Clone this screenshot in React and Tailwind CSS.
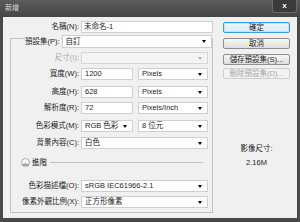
const font = "font-['Liberation_Sans','Noto_Sans_CJK_TC',sans-serif]";

function Arrow({ disabled }) {
  return (
    <span
      className={
        "ml-auto mr-[5px] w-0 h-0 border-l-[2.5px] border-r-[2.5px] border-t-[3px] border-l-transparent border-r-transparent " +
        (disabled ? "border-t-[#b0b0b0]" : "border-t-black")
      }
    />
  );
}

function Select({ children, className = "", disabled, arrow = true }) {
  return (
    <div
      className={
        "flex items-center h-[12px] border pl-[3px] " +
        (disabled ? "bg-[#f4f4f4] border-[#d6d6d6] " : "bg-white border-[#cfcfcf] ") +
        className
      }
    >
      <span className="leading-none whitespace-nowrap">{children}</span>
      {arrow && <Arrow disabled={disabled} />}
    </div>
  );
}

function Row({ label, children, disabled, className = "" }) {
  return (
    <div className={"flex items-center " + className}>
      <span className={"w-[68px] text-right leading-none whitespace-nowrap " + (disabled ? "text-[#a8a8a8]" : "")}>
        {label}
      </span>
      <div className="ml-[2px] flex items-center">{children}</div>
    </div>
  );
}

function Btn({ children, primary, disabled }) {
  return (
    <div
      className={
        "w-[67px] h-[11px] flex items-center justify-center rounded-[2px] border leading-none whitespace-nowrap " +
        (primary
          ? "border-[#3b9ad8] bg-gradient-to-b from-[#eaf6fd] to-[#d5ebf9] shadow-[0_0_0_1px_#bfe3f7_inset]"
          : disabled
          ? "border-[#cfcfcf] bg-[#f2f2f2] text-[#a8a8a8]"
          : "border-[#8f8f8f] bg-gradient-to-b from-[#f6f6f6] to-[#dedede]")
      }
    >
      {children}
    </div>
  );
}

export default function App() {
  return (
    <div className={"w-[300px] h-[222px] bg-[#4a4a4a] flex flex-col text-[7.5px] text-[#1e1e1e] " + font}>
      <div className="h-[17px] flex bg-gradient-to-b from-[#5c5c5c] to-[#444]">
        <span className="ml-[5px] mt-[4px] text-[7px] text-[#d8d8d8] leading-none">新增</span>
        <div className="ml-auto mr-[3px] w-[25px] h-[13px] rounded-b-[3px] border border-t-0 border-[#6a6a6a] bg-[#3a3a3a] flex items-center justify-center text-white text-[8px] font-bold leading-none">
          x
        </div>
      </div>

      <div className="flex-1 mx-[3px] mb-[4px] bg-[#f0f0f0] flex">
        <div className="w-[210px] flex flex-col pt-[4px]">
          <div className="flex items-center">
            <span className="w-[76px] text-right leading-none">名稱(N):</span>
            <div className="ml-[2px] w-[132px] h-[12px] bg-white border border-[#cfcfcf] flex items-center pl-[2px] leading-none">
              未命名-1
            </div>
          </div>

          <div className="mt-[5px] ml-[7px] w-[203px] h-[175px] border border-[#c2c2c2] flex flex-col">
            <div className="-mt-[4px] flex items-center">
              <span className="ml-[14px] bg-[#f0f0f0] pr-[1px] leading-none">預設集(P):</span>
              <Select className="flex-1 h-[13px] ml-[1px]">自訂</Select>
            </div>

            <Row label="尺寸(I):" disabled className="mt-[4px]">
              <Select disabled className="w-[127px]">{""}</Select>
            </Row>

            <Row label="寬度(W):" className="mt-[4px]">
              <Select arrow={false} className="w-[52px]">1200</Select>
              <Select className="w-[70px] ml-[5px]">Pixels</Select>
            </Row>
            <Row label="高度(H):" className="mt-[6px]">
              <Select arrow={false} className="w-[52px]">628</Select>
              <Select className="w-[70px] ml-[5px]">Pixels</Select>
            </Row>
            <Row label="解析度(R):" className="mt-[4px]">
              <Select arrow={false} className="w-[52px]">72</Select>
              <Select className="w-[70px] ml-[5px]">Pixels/Inch</Select>
            </Row>
            <Row label="色彩模式(M):" className="mt-[6px]">
              <Select className="w-[52px]">RGB 色彩</Select>
              <Select className="w-[70px] ml-[5px]">8 位元</Select>
            </Row>
            <Row label="背景內容(C):" className="mt-[5px]">
              <Select className="w-[127px]">白色</Select>
            </Row>

            <div className="mt-[9px] flex items-center">
              <span className="ml-[10px] w-[9px] h-[9px] rounded-full border border-[#a8a8a8] bg-gradient-to-b from-white to-[#e2e2e2] flex items-center justify-center text-[6px] leading-none">
                ︽
              </span>
              <span className="ml-[2px] leading-none">進階</span>
              <span className="flex-1 h-px bg-[#c2c2c2] ml-[3px] mr-[9px]" />
            </div>

            <Row label="色彩描述檔(O):" className="mt-[13px]">
              <Select className="w-[127px]">sRGB IEC61966-2.1</Select>
            </Row>
            <Row label="像素外觀比例(X):" className="mt-[4px]">
              <Select className="w-[127px]">正方形像素</Select>
            </Row>
          </div>
        </div>

        <div className="ml-[10px] flex flex-col">
          <div className="mt-[5px]">
            <Btn primary>確定</Btn>
          </div>
          <div className="mt-[5px]">
            <Btn>取消</Btn>
          </div>
          <div className="mt-[5px]">
            <Btn>儲存預設集(S)...</Btn>
          </div>
          <div className="mt-[3px]">
            <Btn disabled>刪除預設集(D)...</Btn>
          </div>
          <div className="mt-[66px] text-center leading-none">影像尺寸:</div>
          <div className="mt-[6px] text-center leading-none">2.16M</div>
        </div>
      </div>
    </div>
  );
}
